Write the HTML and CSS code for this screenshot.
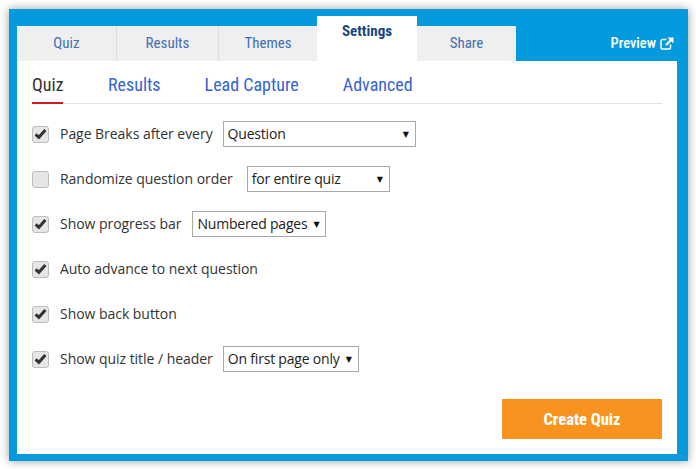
FILE: index.html
```html
<!DOCTYPE html>
<html lang="en">
<head>
<meta charset="utf-8">
<title>Quiz settings</title>
<link rel="stylesheet" href="styles.css">
</head>
<body>
<div class="frame">
  <header class="topbar">
    <nav class="tabs">
      <a class="tab">Quiz</a>
      <a class="tab">Results</a>
      <a class="tab tab-last">Themes</a>
      <a class="tab tab-active">Settings</a>
      <a class="tab tab-share">Share</a>
    </nav>
    <a class="preview">Preview
      <svg class="ext" viewBox="0 0 14 13" width="14" height="13" aria-hidden="true">
        <path d="M10.5 7.5v2.7a1.8 1.8 0 0 1-1.8 1.8H2.8A1.8 1.8 0 0 1 1 10.200V4.300A1.800 1.800 0 0 1 2.800 2.500H6.500" fill="none" stroke="#fff" stroke-width="1.500"/>
        <path d="M7.500 0.500H13.500V6.500L11.300 4.300 6.800 8.800 5.200 7.200 9.700 2.700Z" fill="#fff"/>
      </svg>
    </a>
  </header>
  <main class="panel">
    <nav class="subtabs">
      <a class="subtab subtab-active">Quiz</a>
      <a class="subtab">Results</a>
      <a class="subtab">Lead Capture</a>
      <a class="subtab">Advanced</a>
    </nav>
    <div class="rows">
      <div class="row"><span class="check"><svg class="tick" viewBox="0 0 12 11" width="13" height="12" aria-hidden="true"><path d="M1.500 5.800 4.500 8.600 10.500 1.800" fill="none" stroke="#333" stroke-width="2.800"/></svg></span><span class="label">Page Breaks after every</span><span class="select w-193"><span>Question</span><i class="arrow">&#9660;</i></span></div>
      <div class="row"><span class="check"></span><span class="label">Randomize question order</span><span class="select w-143 ml-4"><span>for entire quiz</span><i class="arrow">&#9660;</i></span></div>
      <div class="row"><span class="check"><svg class="tick" viewBox="0 0 12 11" width="13" height="12" aria-hidden="true"><path d="M1.500 5.800 4.500 8.600 10.500 1.800" fill="none" stroke="#333" stroke-width="2.800"/></svg></span><span class="label">Show progress bar</span><span class="select w-134 ml-1"><span>Numbered pages</span><i class="arrow">&#9660;</i></span></div>
      <div class="row"><span class="check"><svg class="tick" viewBox="0 0 12 11" width="13" height="12" aria-hidden="true"><path d="M1.500 5.800 4.500 8.600 10.500 1.800" fill="none" stroke="#333" stroke-width="2.800"/></svg></span><span class="label">Auto advance to next question</span></div>
      <div class="row"><span class="check"><svg class="tick" viewBox="0 0 12 11" width="13" height="12" aria-hidden="true"><path d="M1.500 5.800 4.500 8.600 10.500 1.800" fill="none" stroke="#333" stroke-width="2.800"/></svg></span><span class="label">Show back button</span></div>
      <div class="row"><span class="check"><svg class="tick" viewBox="0 0 12 11" width="13" height="12" aria-hidden="true"><path d="M1.500 5.800 4.500 8.600 10.500 1.800" fill="none" stroke="#333" stroke-width="2.800"/></svg></span><span class="label">Show quiz title / header</span><span class="select w-136"><span>On first page only</span><i class="arrow">&#9660;</i></span></div>
    </div>
    <div class="actions"><button class="create">Create Quiz</button></div>
  </main>
</div>
</body>
</html>
```
FILE: styles.css
```css
* { box-sizing: border-box; }
html, body { margin: 0; height: 100%; background: #fff; overflow: hidden; }
body { padding: 9px 8px 8px 9px; font-family: "Open Sans", sans-serif; color: #333; }
.frame {
  width: 679px; height: 452px; background: #039bdd;
  padding: 7px 11px 7px 8px;
  display: flex; flex-direction: column;
  box-shadow: 0 0 9px rgba(0,0,0,.4);
}
.topbar { height: 45px; display: flex; justify-content: space-between; align-items: stretch; flex: none; }
.tabs { display: flex; align-items: flex-end; }
.tab {
  width: 100px; height: 35px; background: #efefef; border-right: 1px solid #ddd;
  display: flex; align-items: center; justify-content: center; padding-bottom: 2px;
  font: 400 15px Roboto, sans-serif; font-stretch: condensed; color: #3f6eb5;
}
.tab:nth-child(2) { width: 102px; }
.tab-last { width: 98px; border-right: 0; }
.tab-active { height: 45px; width: 100px; background: #fff; color: #17477f; font-weight: 700; border: 0; padding-bottom: 15px; }
.tab-share { width: 99px; border-right: 0; }
.preview {
  display: flex; align-items: center; gap: 4px; color: #fff; padding: 9px 3px 0 0;
  font: 500 14.500px Roboto, sans-serif; font-stretch: condensed;
}
.panel { flex: 1; background: #fff; padding: 0 15px; display: flex; flex-direction: column; }
.subtabs { display: flex; gap: 44px; height: 43px; border-bottom: 1px solid #e2e2e2; flex: none; }
.subtab {
  font: 400 18px Roboto, sans-serif; font-stretch: condensed; color: #3563d3;
  height: 43px; line-height: 47px;
}
.subtab-active { color: #333; width: 31px; margin-right: 1px; border-bottom: 2px solid #d2181f; }
.rows { display: flex; flex-direction: column; gap: 19px; padding-top: 17px; }
.row { display: flex; align-items: center; height: 26px; font-size: 14px; gap: 10px; }
.check {
  width: 17px; height: 17px; border: 1px solid #bdbdbd; border-radius: 3px; background: #e6e6e6;
  display: flex; align-items: center; justify-content: center;
  margin-right: 1px; flex: none;
}
.tick { flex: none; }
.label { color: #333; padding-bottom: 2px; letter-spacing: -.04px; }
.select {
  height: 26px; border: 1px solid #a9a9a9; background: #fff; display: flex; align-items: center; justify-content: space-between;
  padding: 0 6px 2px 4px; color: #222; font-size: 14px; letter-spacing: -.2px; flex: none;
}
.arrow { font: normal 8px "DejaVu Sans", sans-serif; color: #111; padding-top: 2px; }
.w-193 { width: 193px; }
.w-143 { width: 143px; }
.w-134 { width: 134px; }
.w-136 { width: 136px; }
.ml-4 { margin-left: 4px; }
.ml-1 { margin-left: 1px; }
.actions { margin-top: auto; display: flex; justify-content: flex-end; padding-bottom: 15px; }
.create {
  width: 160px; height: 40px; border: 0; border-radius: 1px; background: #f7931e; color: #fff;
  font: 800 16.500px Roboto, sans-serif; font-stretch: condensed;
}
```
